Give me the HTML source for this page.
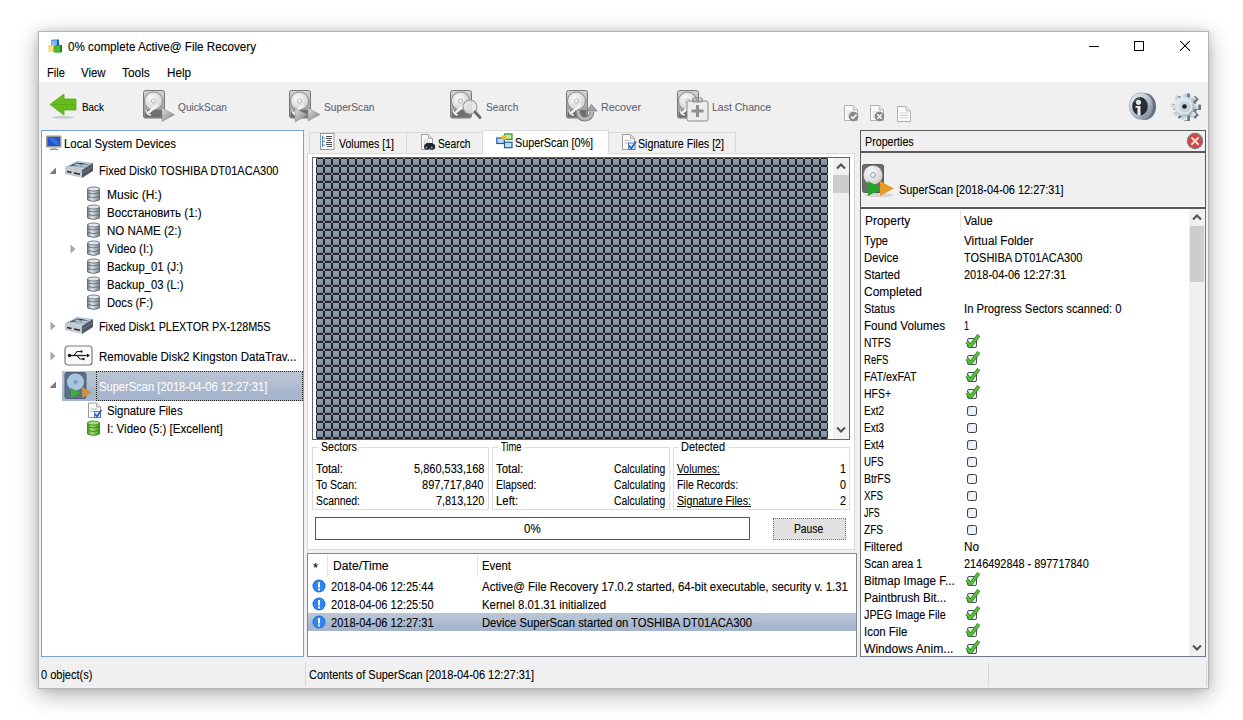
<!DOCTYPE html><html><head><meta charset="utf-8"><style>
*{margin:0;padding:0}
html,body{width:1243px;height:720px;overflow:hidden;background:#fff;font-family:"Liberation Sans",sans-serif}
.a{position:absolute;display:block}
.t{position:absolute;white-space:pre;font-family:"Liberation Sans",sans-serif;-webkit-text-stroke:0.1px currentColor}
</style></head><body><div class="a" style="left:38px;top:31px;width:1171px;height:658px;box-shadow:0 6px 22px rgba(0,0,0,0.30), 0 0 8px rgba(0,0,0,0.12);background:#f0f0f0"></div>
<div class="a" style="left:38px;top:31px;width:1171px;height:658px;background:#f0f0f0;box-sizing:border-box;border:1px solid #b4b4b4;"></div>
<div class="a" style="left:39px;top:32px;width:1169px;height:50px;background:#ffffff;"></div>
<div class="t" style="left:68px;top:41px;font-size:12px;line-height:12px;color:#000;transform:scaleX(0.9711);transform-origin:0 0;">0% complete Active@ File Recovery</div>
<div class="a" style="left:1089px;top:46px;width:10px;height:1px;background:#000;"></div>
<div class="a" style="left:1134px;top:41px;width:10px;height:10px;box-sizing:border-box;border:1px solid #000;"></div>
<svg class="a" style="left:1180px;top:41px;shape-rendering:crispEdges;" width="10" height="10" viewBox="0 0 10 10"><rect x="0" y="0" width="1" height="1" fill="#000"/><rect x="9" y="0" width="1" height="1" fill="#000"/><rect x="1" y="0" width="1" height="1" fill="#000" opacity="0.3"/><rect x="8" y="0" width="1" height="1" fill="#000" opacity="0.3"/><rect x="1" y="1" width="1" height="1" fill="#000"/><rect x="8" y="1" width="1" height="1" fill="#000"/><rect x="2" y="1" width="1" height="1" fill="#000" opacity="0.3"/><rect x="7" y="1" width="1" height="1" fill="#000" opacity="0.3"/><rect x="2" y="2" width="1" height="1" fill="#000"/><rect x="7" y="2" width="1" height="1" fill="#000"/><rect x="3" y="2" width="1" height="1" fill="#000" opacity="0.3"/><rect x="6" y="2" width="1" height="1" fill="#000" opacity="0.3"/><rect x="3" y="3" width="1" height="1" fill="#000"/><rect x="6" y="3" width="1" height="1" fill="#000"/><rect x="4" y="3" width="1" height="1" fill="#000" opacity="0.3"/><rect x="5" y="3" width="1" height="1" fill="#000" opacity="0.3"/><rect x="4" y="4" width="1" height="1" fill="#000"/><rect x="5" y="4" width="1" height="1" fill="#000"/><rect x="5" y="4" width="1" height="1" fill="#000" opacity="0.3"/><rect x="4" y="4" width="1" height="1" fill="#000" opacity="0.3"/><rect x="5" y="5" width="1" height="1" fill="#000"/><rect x="4" y="5" width="1" height="1" fill="#000"/><rect x="6" y="5" width="1" height="1" fill="#000" opacity="0.3"/><rect x="3" y="5" width="1" height="1" fill="#000" opacity="0.3"/><rect x="6" y="6" width="1" height="1" fill="#000"/><rect x="3" y="6" width="1" height="1" fill="#000"/><rect x="7" y="6" width="1" height="1" fill="#000" opacity="0.3"/><rect x="2" y="6" width="1" height="1" fill="#000" opacity="0.3"/><rect x="7" y="7" width="1" height="1" fill="#000"/><rect x="2" y="7" width="1" height="1" fill="#000"/><rect x="8" y="7" width="1" height="1" fill="#000" opacity="0.3"/><rect x="1" y="7" width="1" height="1" fill="#000" opacity="0.3"/><rect x="8" y="8" width="1" height="1" fill="#000"/><rect x="1" y="8" width="1" height="1" fill="#000"/><rect x="9" y="8" width="1" height="1" fill="#000" opacity="0.3"/><rect x="0" y="8" width="1" height="1" fill="#000" opacity="0.3"/><rect x="9" y="9" width="1" height="1" fill="#000"/><rect x="0" y="9" width="1" height="1" fill="#000"/></svg>
<div class="t" style="left:47px;top:67px;font-size:12px;line-height:12px;color:#000;transform:scaleX(0.9305);transform-origin:0 0;">File</div>
<div class="t" style="left:81px;top:67px;font-size:12px;line-height:12px;color:#000;transform:scaleX(0.9536);transform-origin:0 0;">View</div>
<div class="t" style="left:122px;top:67px;font-size:12px;line-height:12px;color:#000;transform:scaleX(0.9887);transform-origin:0 0;">Tools</div>
<div class="t" style="left:167px;top:67px;font-size:12px;line-height:12px;color:#000;transform:scaleX(0.9722);transform-origin:0 0;">Help</div>
<div class="t" style="left:82px;top:102px;font-size:11px;line-height:11px;color:#000;transform:scaleX(0.8991);transform-origin:0 0;">Back</div>
<div class="t" style="left:178px;top:102px;font-size:11px;line-height:11px;color:#5f6670;transform:scaleX(0.9210);transform-origin:0 0;">QuickScan</div>
<div class="t" style="left:324px;top:102px;font-size:11px;line-height:11px;color:#5f6670;transform:scaleX(0.9277);transform-origin:0 0;">SuperScan</div>
<div class="t" style="left:486px;top:102px;font-size:11px;line-height:11px;color:#5f6670;transform:scaleX(0.9266);transform-origin:0 0;">Search</div>
<div class="t" style="left:601px;top:102px;font-size:11px;line-height:11px;color:#5f6670;transform:scaleX(0.9764);transform-origin:0 0;">Recover</div>
<div class="t" style="left:712px;top:102px;font-size:11px;line-height:11px;color:#5f6670;transform:scaleX(0.9552);transform-origin:0 0;">Last Chance</div>
<div class="a" style="left:41px;top:130px;width:263px;height:527px;background:#fff;box-sizing:border-box;border:1px solid #7aa2d6;"></div>
<div class="t" style="left:64px;top:138px;font-size:12px;line-height:12px;color:#000;transform:scaleX(0.9488);transform-origin:0 0;">Local System Devices</div>
<div class="t" style="left:99px;top:165px;font-size:12px;line-height:12px;color:#000;transform:scaleX(0.9206);transform-origin:0 0;">Fixed Disk0 TOSHIBA DT01ACA300</div>
<div class="t" style="left:107px;top:189px;font-size:12px;line-height:12px;color:#000;transform:scaleX(1.0005);transform-origin:0 0;">Music (H:)</div>
<div class="t" style="left:107px;top:207px;font-size:12px;line-height:12px;color:#000;transform:scaleX(0.9645);transform-origin:0 0;">Восстановить (1:)</div>
<div class="t" style="left:107px;top:225px;font-size:12px;line-height:12px;color:#000;transform:scaleX(0.9606);transform-origin:0 0;">NO NAME (2:)</div>
<div class="t" style="left:107px;top:243px;font-size:12px;line-height:12px;color:#000;transform:scaleX(0.9491);transform-origin:0 0;">Video (I:)</div>
<div class="t" style="left:107px;top:261px;font-size:12px;line-height:12px;color:#000;transform:scaleX(0.9415);transform-origin:0 0;">Backup_01 (J:)</div>
<div class="t" style="left:107px;top:279px;font-size:12px;line-height:12px;color:#000;transform:scaleX(0.9399);transform-origin:0 0;">Backup_03 (L:)</div>
<div class="t" style="left:107px;top:297px;font-size:12px;line-height:12px;color:#000;transform:scaleX(0.9322);transform-origin:0 0;">Docs (F:)</div>
<div class="t" style="left:99px;top:321px;font-size:12px;line-height:12px;color:#000;transform:scaleX(0.9033);transform-origin:0 0;">Fixed Disk1 PLEXTOR PX-128M5S</div>
<div class="t" style="left:99px;top:351px;font-size:12px;line-height:12px;color:#000;transform:scaleX(0.9609);transform-origin:0 0;">Removable Disk2 Kingston DataTrav...</div>
<div class="t" style="left:107px;top:405px;font-size:12px;line-height:12px;color:#000;transform:scaleX(0.9444);transform-origin:0 0;">Signature Files</div>
<div class="t" style="left:107px;top:423px;font-size:12px;line-height:12px;color:#000;transform:scaleX(0.9600);transform-origin:0 0;">I: Video (5:) [Excellent]</div>
<div class="a" style="left:62px;top:371px;width:241px;height:30px;background:linear-gradient(#b9c4d3,#b3bfd1 45%,#a8b7ce 60%,#a5b5cd);"></div>
<div class="a" style="left:96px;top:371px;width:207px;height:30px;box-sizing:border-box;border:1px dotted #222;"></div>
<div class="t" style="left:99px;top:381px;font-size:12px;line-height:12px;color:#fcfdff;transform:scaleX(0.9308);transform-origin:0 0;">SuperScan [2018-04-06 12:27:31]</div>
<div class="a" style="left:307px;top:153px;width:548px;height:397px;background:#fff;box-sizing:border-box;border:1px solid #d9d9d9;"></div>
<div class="a" style="left:309px;top:132px;width:98px;height:22px;background:#f0f0f0;box-sizing:border-box;border:1px solid #d9d9d9;"></div>
<div class="a" style="left:406px;top:132px;width:77px;height:22px;background:#f0f0f0;box-sizing:border-box;border:1px solid #d9d9d9;"></div>
<div class="a" style="left:608px;top:132px;width:128px;height:22px;background:#f0f0f0;box-sizing:border-box;border:1px solid #d9d9d9;"></div>
<div class="a" style="left:482px;top:130px;width:127px;height:24px;background:#fff;box-sizing:border-box;border:1px solid #d9d9d9;border-bottom:none;"></div>
<div class="t" style="left:339px;top:138px;font-size:12px;line-height:12px;color:#000;transform:scaleX(0.8771);transform-origin:0 0;">Volumes [1]</div>
<div class="t" style="left:438px;top:138px;font-size:12px;line-height:12px;color:#000;transform:scaleX(0.8546);transform-origin:0 0;">Search</div>
<div class="t" style="left:515px;top:137px;font-size:12px;line-height:12px;color:#000;transform:scaleX(0.8995);transform-origin:0 0;">SuperScan [0%]</div>
<div class="t" style="left:638px;top:138px;font-size:12px;line-height:12px;color:#000;transform:scaleX(0.8892);transform-origin:0 0;">Signature Files [2]</div>
<div class="a" style="left:312px;top:157px;width:538px;height:283px;background:#fff;box-sizing:border-box;border:1px solid #646464;"></div>
<svg class="a" style="left:0;top:0" width="1243" height="720" viewBox="0 0 1243 720"><defs><pattern id="tp" x="316" y="158" width="8" height="8" patternUnits="userSpaceOnUse"><rect width="8" height="8" fill="#212329"/><rect x="1" y="1" width="6" height="6" fill="url(#tg)"/><rect x="0" y="0" width="1" height="1" fill="#8c8c8c"/><rect x="7" y="0" width="1" height="1" fill="#8c8c8c"/><rect x="0" y="7" width="1" height="1" fill="#8c8c8c"/><rect x="7" y="7" width="1" height="1" fill="#8c8c8c"/></pattern><linearGradient id="tg" x1="0" y1="0" x2="0" y2="1"><stop offset="0" stop-color="#93a3b3"/><stop offset="1" stop-color="#7b8a99"/></linearGradient></defs><rect x="316" y="158" width="512" height="281" fill="url(#tp)"/></svg>
<div class="a" style="left:833px;top:158px;width:16px;height:281px;background:#f0f0f0;"></div>
<div class="a" style="left:833px;top:175px;width:16px;height:18px;background:#cdcdcd;"></div>
<svg class="a" style="left:836px;top:162px;" width="10" height="8" viewBox="0 0 10 8"><path d="M1 6.5 L5 2.5 L9 6.5" stroke="#505050" stroke-width="2" fill="none"/></svg>
<svg class="a" style="left:836px;top:426px;" width="10" height="8" viewBox="0 0 10 8"><path d="M1 1.5 L5 5.5 L9 1.5" stroke="#505050" stroke-width="2" fill="none"/></svg>
<div class="a" style="left:312px;top:447px;width:177px;height:63px;box-sizing:border-box;border:1px solid #dcdcdc;"></div>
<div class="a" style="left:492px;top:447px;width:178px;height:63px;box-sizing:border-box;border:1px solid #dcdcdc;"></div>
<div class="a" style="left:673px;top:447px;width:177px;height:63px;box-sizing:border-box;border:1px solid #dcdcdc;"></div>
<div class="a" style="left:318px;top:440px;width:40px;height:15px;background:#fff;"></div>
<div class="a" style="left:498px;top:440px;width:26px;height:15px;background:#fff;"></div>
<div class="a" style="left:678px;top:440px;width:50px;height:15px;background:#fff;"></div>
<div class="t" style="left:321px;top:441px;font-size:12px;line-height:12px;color:#000;transform:scaleX(0.8799);transform-origin:0 0;">Sectors</div>
<div class="t" style="left:501px;top:441px;font-size:12px;line-height:12px;color:#000;transform:scaleX(0.7738);transform-origin:0 0;">Time</div>
<div class="t" style="left:681px;top:441px;font-size:12px;line-height:12px;color:#000;transform:scaleX(0.9161);transform-origin:0 0;">Detected</div>
<div class="t" style="left:316px;top:463px;font-size:12px;line-height:12px;color:#000;transform:scaleX(0.9412);transform-origin:0 0;">Total:</div>
<div class="t" style="left:414px;top:463px;font-size:12px;line-height:12px;color:#000;transform:scaleX(0.9173);transform-origin:0 0;">5,860,533,168</div>
<div class="t" style="left:316px;top:479px;font-size:12px;line-height:12px;color:#000;transform:scaleX(0.8779);transform-origin:0 0;">To Scan:</div>
<div class="t" style="left:422px;top:479px;font-size:12px;line-height:12px;color:#000;transform:scaleX(0.9216);transform-origin:0 0;">897,717,840</div>
<div class="t" style="left:316px;top:495px;font-size:12px;line-height:12px;color:#000;transform:scaleX(0.8675);transform-origin:0 0;">Scanned:</div>
<div class="t" style="left:436px;top:495px;font-size:12px;line-height:12px;color:#000;transform:scaleX(0.9047);transform-origin:0 0;">7,813,120</div>
<div class="t" style="left:496px;top:463px;font-size:12px;line-height:12px;color:#000;transform:scaleX(0.9516);transform-origin:0 0;">Total:</div>
<div class="t" style="left:614px;top:463px;font-size:12px;line-height:12px;color:#000;transform:scaleX(0.8623);transform-origin:0 0;">Calculating</div>
<div class="t" style="left:496px;top:479px;font-size:12px;line-height:12px;color:#000;transform:scaleX(0.8629);transform-origin:0 0;">Elapsed:</div>
<div class="t" style="left:614px;top:479px;font-size:12px;line-height:12px;color:#000;transform:scaleX(0.8623);transform-origin:0 0;">Calculating</div>
<div class="t" style="left:496px;top:495px;font-size:12px;line-height:12px;color:#000;transform:scaleX(0.9461);transform-origin:0 0;">Left:</div>
<div class="t" style="left:614px;top:495px;font-size:12px;line-height:12px;color:#000;transform:scaleX(0.8623);transform-origin:0 0;">Calculating</div>
<div class="t" style="left:677px;top:463px;font-size:12px;line-height:12px;color:#000;transform:scaleX(0.8671);transform-origin:0 0;text-decoration:underline;">Volumes:</div>
<div class="t" style="left:840px;top:463px;font-size:12px;line-height:12px;color:#000;transform:scaleX(0.8972);transform-origin:0 0;">1</div>
<div class="t" style="left:677px;top:479px;font-size:12px;line-height:12px;color:#000;transform:scaleX(0.8630);transform-origin:0 0;">File Records:</div>
<div class="t" style="left:840px;top:479px;font-size:12px;line-height:12px;color:#000;transform:scaleX(0.8972);transform-origin:0 0;">0</div>
<div class="t" style="left:677px;top:495px;font-size:12px;line-height:12px;color:#000;transform:scaleX(0.8876);transform-origin:0 0;text-decoration:underline;">Signature Files:</div>
<div class="t" style="left:840px;top:495px;font-size:12px;line-height:12px;color:#000;transform:scaleX(0.8972);transform-origin:0 0;">2</div>
<div class="a" style="left:315px;top:517px;width:435px;height:23px;background:#fff;box-sizing:border-box;border:1px solid #555;"></div>
<div class="t" style="left:524px;top:523px;font-size:12px;line-height:12px;color:#000;transform:scaleX(0.9571);transform-origin:0 0;">0%</div>
<div class="a" style="left:773px;top:518px;width:73px;height:22px;background:#e1e1e1;box-sizing:border-box;border:1px dotted #6f7883;"></div>
<div class="t" style="left:794px;top:523px;font-size:12px;line-height:12px;color:#000;transform:scaleX(0.8580);transform-origin:0 0;">Pause</div>
<div class="a" style="left:307px;top:553px;width:550px;height:104px;background:#fff;box-sizing:border-box;border:1px solid #828790;"></div>
<div class="a" style="left:327px;top:555px;width:1px;height:22px;background:#e5e5e5;"></div>
<div class="a" style="left:477px;top:555px;width:1px;height:22px;background:#e5e5e5;"></div>
<div class="t" style="left:313px;top:562px;font-size:12px;line-height:12px;color:#000;transform:scaleX(1.0702);transform-origin:0 0;">*</div>
<div class="t" style="left:333px;top:560px;font-size:12px;line-height:12px;color:#000;transform:scaleX(1.0126);transform-origin:0 0;">Date/Time</div>
<div class="t" style="left:482px;top:560px;font-size:12px;line-height:12px;color:#000;transform:scaleX(0.9450);transform-origin:0 0;">Event</div>
<div class="a" style="left:308px;top:613px;width:548px;height:18px;background:linear-gradient(#bac6d6,#b3c0d3 45%,#a7b7cf 60%,#a5b5ce);"></div>
<div class="t" style="left:331px;top:581px;font-size:12px;line-height:12px;color:#000;transform:scaleX(0.9207);transform-origin:0 0;">2018-04-06 12:25:44</div>
<div class="t" style="left:482px;top:581px;font-size:12px;line-height:12px;color:#000;transform:scaleX(0.9561);transform-origin:0 0;">Active@ File Recovery 17.0.2 started, 64-bit executable, security v. 1.31</div>
<svg class="a" style="left:312px;top:579px;" width="14" height="14" viewBox="0 0 14 14"><circle cx="7" cy="7" r="6.5" fill="#1f6fd6"/><circle cx="7" cy="7" r="5.5" fill="#2f86ee"/><rect x="6" y="3" width="2" height="5.5" fill="#fff"/><rect x="6" y="9.5" width="2" height="2" fill="#fff"/></svg>
<div class="t" style="left:331px;top:599px;font-size:12px;line-height:12px;color:#000;transform:scaleX(0.9207);transform-origin:0 0;">2018-04-06 12:25:50</div>
<div class="t" style="left:482px;top:599px;font-size:12px;line-height:12px;color:#000;transform:scaleX(0.9483);transform-origin:0 0;">Kernel 8.01.31 initialized</div>
<svg class="a" style="left:312px;top:597px;" width="14" height="14" viewBox="0 0 14 14"><circle cx="7" cy="7" r="6.5" fill="#1f6fd6"/><circle cx="7" cy="7" r="5.5" fill="#2f86ee"/><rect x="6" y="3" width="2" height="5.5" fill="#fff"/><rect x="6" y="9.5" width="2" height="2" fill="#fff"/></svg>
<div class="t" style="left:331px;top:617px;font-size:12px;line-height:12px;color:#000;transform:scaleX(0.9207);transform-origin:0 0;">2018-04-06 12:27:31</div>
<div class="t" style="left:482px;top:617px;font-size:12px;line-height:12px;color:#000;transform:scaleX(0.9363);transform-origin:0 0;">Device SuperScan started on TOSHIBA DT01ACA300</div>
<svg class="a" style="left:312px;top:615px;" width="14" height="14" viewBox="0 0 14 14"><circle cx="7" cy="7" r="6.5" fill="#1f6fd6"/><circle cx="7" cy="7" r="5.5" fill="#2f86ee"/><rect x="6" y="3" width="2" height="5.5" fill="#fff"/><rect x="6" y="9.5" width="2" height="2" fill="#fff"/></svg>
<div class="t" style="left:41px;top:669px;font-size:12px;line-height:12px;color:#000;transform:scaleX(0.9173);transform-origin:0 0;">0 object(s)</div>
<div class="a" style="left:305px;top:662px;width:1px;height:24px;background:#dadada;"></div>
<div class="t" style="left:309px;top:669px;font-size:12px;line-height:12px;color:#000;transform:scaleX(0.9164);transform-origin:0 0;">Contents of SuperScan [2018-04-06 12:27:31]</div>
<div class="a" style="left:988px;top:662px;width:1px;height:24px;background:#dadada;"></div>
<div class="a" style="left:1206px;top:662px;width:1px;height:24px;background:#dadada;"></div>
<div class="a" style="left:860px;top:130px;width:346px;height:22px;background:#f0f0f0;box-sizing:border-box;border:1px solid #5a5a5a;"></div>
<div class="a" style="left:860px;top:151px;width:346px;height:58px;background:#f0f0f0;box-sizing:border-box;border:1px solid #5a5a5a;"></div>
<div class="a" style="left:861px;top:152px;width:344px;height:1px;background:#5a5a5a;"></div>
<div class="t" style="left:865px;top:136px;font-size:12px;line-height:12px;color:#000;transform:scaleX(0.8903);transform-origin:0 0;">Properties</div>
<svg class="a" style="left:1186px;top:132px;" width="18" height="18" viewBox="0 0 18 18"><circle cx="9" cy="9" r="7.6" fill="#d8473e" stroke="#6f7f90" stroke-width="1.2"/><path d="M5.4 5.4 L12.6 12.6 M12.6 5.4 L5.4 12.6" stroke="#f4f0f0" stroke-width="1.7"/></svg>
<div class="t" style="left:899px;top:184px;font-size:12px;line-height:12px;color:#000;transform:scaleX(0.9098);transform-origin:0 0;">SuperScan [2018-04-06 12:27:31]</div>
<div class="a" style="left:860px;top:208px;width:346px;height:449px;background:#fff;box-sizing:border-box;border:1px solid #6f7784;"></div>
<div class="a" style="left:860px;top:207px;width:346px;height:1px;background:#5a5a5a;"></div>
<div class="a" style="left:860px;top:208px;width:346px;height:1px;background:#5a5a5a;"></div>
<div class="a" style="left:861px;top:206px;width:344px;height:1px;background:#ffffff;"></div>
<div class="a" style="left:960px;top:210px;width:1px;height:21px;background:#e5e5e5;"></div>
<div class="t" style="left:865px;top:215px;font-size:12px;line-height:12px;color:#000;transform:scaleX(0.9965);transform-origin:0 0;">Property</div>
<div class="t" style="left:964px;top:215px;font-size:12px;line-height:12px;color:#000;transform:scaleX(0.9660);transform-origin:0 0;">Value</div>
<div class="t" style="left:864px;top:235px;font-size:12px;line-height:12px;color:#000;transform:scaleX(0.9225);transform-origin:0 0;">Type</div>
<div class="t" style="left:964px;top:235px;font-size:12px;line-height:12px;color:#000;transform:scaleX(0.9767);transform-origin:0 0;">Virtual Folder</div>
<div class="t" style="left:864px;top:252px;font-size:12px;line-height:12px;color:#000;transform:scaleX(0.9404);transform-origin:0 0;">Device</div>
<div class="t" style="left:964px;top:252px;font-size:12px;line-height:12px;color:#000;transform:scaleX(0.9166);transform-origin:0 0;">TOSHIBA DT01ACA300</div>
<div class="t" style="left:864px;top:269px;font-size:12px;line-height:12px;color:#000;transform:scaleX(0.9302);transform-origin:0 0;">Started</div>
<div class="t" style="left:964px;top:269px;font-size:12px;line-height:12px;color:#000;transform:scaleX(0.9153);transform-origin:0 0;">2018-04-06 12:27:31</div>
<div class="t" style="left:864px;top:286px;font-size:12px;line-height:12px;color:#000;transform:scaleX(0.9995);transform-origin:0 0;">Completed</div>
<div class="t" style="left:864px;top:303px;font-size:12px;line-height:12px;color:#000;transform:scaleX(0.9109);transform-origin:0 0;">Status</div>
<div class="t" style="left:964px;top:303px;font-size:12px;line-height:12px;color:#000;transform:scaleX(0.9407);transform-origin:0 0;">In Progress Sectors scanned: 0</div>
<div class="t" style="left:864px;top:320px;font-size:12px;line-height:12px;color:#000;transform:scaleX(0.9713);transform-origin:0 0;">Found Volumes</div>
<div class="t" style="left:964px;top:320px;font-size:12px;line-height:12px;color:#000;transform:scaleX(0.7477);transform-origin:0 0;">1</div>
<div class="t" style="left:864px;top:337px;font-size:12px;line-height:12px;color:#000;transform:scaleX(0.8614);transform-origin:0 0;">NTFS</div>
<svg class="a" style="left:965px;top:333px;" width="16" height="16" viewBox="0 0 16 16"><rect x="2.5" y="5.5" width="9" height="9" rx="1.5" fill="#e4ecf3" stroke="#4a525a"/><path d="M1.8 8.8 L5.6 13.2 L13.8 2.2" stroke="#2a7a1a" stroke-width="3.6" fill="none" stroke-linejoin="round"/><path d="M1.8 8.8 L5.6 13.2 L13.8 2.2" stroke="#5cc33a" stroke-width="2.2" fill="none" stroke-linejoin="round"/></svg>
<div class="t" style="left:864px;top:354px;font-size:12px;line-height:12px;color:#000;transform:scaleX(0.7984);transform-origin:0 0;">ReFS</div>
<svg class="a" style="left:965px;top:350px;" width="16" height="16" viewBox="0 0 16 16"><rect x="2.5" y="5.5" width="9" height="9" rx="1.5" fill="#e4ecf3" stroke="#4a525a"/><path d="M1.8 8.8 L5.6 13.2 L13.8 2.2" stroke="#2a7a1a" stroke-width="3.6" fill="none" stroke-linejoin="round"/><path d="M1.8 8.8 L5.6 13.2 L13.8 2.2" stroke="#5cc33a" stroke-width="2.2" fill="none" stroke-linejoin="round"/></svg>
<div class="t" style="left:864px;top:371px;font-size:12px;line-height:12px;color:#000;transform:scaleX(0.9015);transform-origin:0 0;">FAT/exFAT</div>
<svg class="a" style="left:965px;top:367px;" width="16" height="16" viewBox="0 0 16 16"><rect x="2.5" y="5.5" width="9" height="9" rx="1.5" fill="#e4ecf3" stroke="#4a525a"/><path d="M1.8 8.8 L5.6 13.2 L13.8 2.2" stroke="#2a7a1a" stroke-width="3.6" fill="none" stroke-linejoin="round"/><path d="M1.8 8.8 L5.6 13.2 L13.8 2.2" stroke="#5cc33a" stroke-width="2.2" fill="none" stroke-linejoin="round"/></svg>
<div class="t" style="left:864px;top:388px;font-size:12px;line-height:12px;color:#000;transform:scaleX(0.8705);transform-origin:0 0;">HFS+</div>
<svg class="a" style="left:965px;top:384px;" width="16" height="16" viewBox="0 0 16 16"><rect x="2.5" y="5.5" width="9" height="9" rx="1.5" fill="#e4ecf3" stroke="#4a525a"/><path d="M1.8 8.8 L5.6 13.2 L13.8 2.2" stroke="#2a7a1a" stroke-width="3.6" fill="none" stroke-linejoin="round"/><path d="M1.8 8.8 L5.6 13.2 L13.8 2.2" stroke="#5cc33a" stroke-width="2.2" fill="none" stroke-linejoin="round"/></svg>
<div class="t" style="left:864px;top:405px;font-size:12px;line-height:12px;color:#000;transform:scaleX(0.8328);transform-origin:0 0;">Ext2</div>
<svg class="a" style="left:965px;top:404px;" width="14" height="14" viewBox="0 0 14 14"><defs><linearGradient id="cbg" x1="0" y1="0" x2="1" y2="1"><stop offset="0" stop-color="#b8c6d4"/><stop offset="0.4" stop-color="#f2f6fa"/><stop offset="1" stop-color="#dfe8f0"/></linearGradient></defs><rect x="2.5" y="2.5" width="9" height="9" rx="1.8" fill="url(#cbg)" stroke="#3a3f45"/></svg>
<div class="t" style="left:864px;top:422px;font-size:12px;line-height:12px;color:#000;transform:scaleX(0.8328);transform-origin:0 0;">Ext3</div>
<svg class="a" style="left:965px;top:421px;" width="14" height="14" viewBox="0 0 14 14"><defs><linearGradient id="cbg" x1="0" y1="0" x2="1" y2="1"><stop offset="0" stop-color="#b8c6d4"/><stop offset="0.4" stop-color="#f2f6fa"/><stop offset="1" stop-color="#dfe8f0"/></linearGradient></defs><rect x="2.5" y="2.5" width="9" height="9" rx="1.8" fill="url(#cbg)" stroke="#3a3f45"/></svg>
<div class="t" style="left:864px;top:439px;font-size:12px;line-height:12px;color:#000;transform:scaleX(0.8328);transform-origin:0 0;">Ext4</div>
<svg class="a" style="left:965px;top:438px;" width="14" height="14" viewBox="0 0 14 14"><defs><linearGradient id="cbg" x1="0" y1="0" x2="1" y2="1"><stop offset="0" stop-color="#b8c6d4"/><stop offset="0.4" stop-color="#f2f6fa"/><stop offset="1" stop-color="#dfe8f0"/></linearGradient></defs><rect x="2.5" y="2.5" width="9" height="9" rx="1.8" fill="url(#cbg)" stroke="#3a3f45"/></svg>
<div class="t" style="left:864px;top:456px;font-size:12px;line-height:12px;color:#000;transform:scaleX(0.8125);transform-origin:0 0;">UFS</div>
<svg class="a" style="left:965px;top:455px;" width="14" height="14" viewBox="0 0 14 14"><defs><linearGradient id="cbg" x1="0" y1="0" x2="1" y2="1"><stop offset="0" stop-color="#b8c6d4"/><stop offset="0.4" stop-color="#f2f6fa"/><stop offset="1" stop-color="#dfe8f0"/></linearGradient></defs><rect x="2.5" y="2.5" width="9" height="9" rx="1.8" fill="url(#cbg)" stroke="#3a3f45"/></svg>
<div class="t" style="left:864px;top:473px;font-size:12px;line-height:12px;color:#000;transform:scaleX(0.8705);transform-origin:0 0;">BtrFS</div>
<svg class="a" style="left:965px;top:472px;" width="14" height="14" viewBox="0 0 14 14"><defs><linearGradient id="cbg" x1="0" y1="0" x2="1" y2="1"><stop offset="0" stop-color="#b8c6d4"/><stop offset="0.4" stop-color="#f2f6fa"/><stop offset="1" stop-color="#dfe8f0"/></linearGradient></defs><rect x="2.5" y="2.5" width="9" height="9" rx="1.8" fill="url(#cbg)" stroke="#3a3f45"/></svg>
<div class="t" style="left:864px;top:490px;font-size:12px;line-height:12px;color:#000;transform:scaleX(0.8139);transform-origin:0 0;">XFS</div>
<svg class="a" style="left:965px;top:489px;" width="14" height="14" viewBox="0 0 14 14"><defs><linearGradient id="cbg" x1="0" y1="0" x2="1" y2="1"><stop offset="0" stop-color="#b8c6d4"/><stop offset="0.4" stop-color="#f2f6fa"/><stop offset="1" stop-color="#dfe8f0"/></linearGradient></defs><rect x="2.5" y="2.5" width="9" height="9" rx="1.8" fill="url(#cbg)" stroke="#3a3f45"/></svg>
<div class="t" style="left:864px;top:507px;font-size:12px;line-height:12px;color:#000;transform:scaleX(0.7356);transform-origin:0 0;">JFS</div>
<svg class="a" style="left:965px;top:506px;" width="14" height="14" viewBox="0 0 14 14"><defs><linearGradient id="cbg" x1="0" y1="0" x2="1" y2="1"><stop offset="0" stop-color="#b8c6d4"/><stop offset="0.4" stop-color="#f2f6fa"/><stop offset="1" stop-color="#dfe8f0"/></linearGradient></defs><rect x="2.5" y="2.5" width="9" height="9" rx="1.8" fill="url(#cbg)" stroke="#3a3f45"/></svg>
<div class="t" style="left:864px;top:524px;font-size:12px;line-height:12px;color:#000;transform:scaleX(0.8380);transform-origin:0 0;">ZFS</div>
<svg class="a" style="left:965px;top:523px;" width="14" height="14" viewBox="0 0 14 14"><defs><linearGradient id="cbg" x1="0" y1="0" x2="1" y2="1"><stop offset="0" stop-color="#b8c6d4"/><stop offset="0.4" stop-color="#f2f6fa"/><stop offset="1" stop-color="#dfe8f0"/></linearGradient></defs><rect x="2.5" y="2.5" width="9" height="9" rx="1.8" fill="url(#cbg)" stroke="#3a3f45"/></svg>
<div class="t" style="left:864px;top:541px;font-size:12px;line-height:12px;color:#000;transform:scaleX(0.9571);transform-origin:0 0;">Filtered</div>
<div class="t" style="left:964px;top:541px;font-size:12px;line-height:12px;color:#000;transform:scaleX(0.9776);transform-origin:0 0;">No</div>
<div class="t" style="left:864px;top:558px;font-size:12px;line-height:12px;color:#000;transform:scaleX(0.9008);transform-origin:0 0;">Scan area 1</div>
<div class="t" style="left:964px;top:558px;font-size:12px;line-height:12px;color:#000;transform:scaleX(0.9071);transform-origin:0 0;">2146492848 - 897717840</div>
<div class="t" style="left:864px;top:575px;font-size:12px;line-height:12px;color:#000;transform:scaleX(0.9714);transform-origin:0 0;">Bitmap Image F...</div>
<svg class="a" style="left:965px;top:571px;" width="16" height="16" viewBox="0 0 16 16"><rect x="2.5" y="5.5" width="9" height="9" rx="1.5" fill="#e4ecf3" stroke="#4a525a"/><path d="M1.8 8.8 L5.6 13.2 L13.8 2.2" stroke="#2a7a1a" stroke-width="3.6" fill="none" stroke-linejoin="round"/><path d="M1.8 8.8 L5.6 13.2 L13.8 2.2" stroke="#5cc33a" stroke-width="2.2" fill="none" stroke-linejoin="round"/></svg>
<div class="t" style="left:864px;top:592px;font-size:12px;line-height:12px;color:#000;transform:scaleX(0.9714);transform-origin:0 0;">Paintbrush Bit...</div>
<svg class="a" style="left:965px;top:588px;" width="16" height="16" viewBox="0 0 16 16"><rect x="2.5" y="5.5" width="9" height="9" rx="1.5" fill="#e4ecf3" stroke="#4a525a"/><path d="M1.8 8.8 L5.6 13.2 L13.8 2.2" stroke="#2a7a1a" stroke-width="3.6" fill="none" stroke-linejoin="round"/><path d="M1.8 8.8 L5.6 13.2 L13.8 2.2" stroke="#5cc33a" stroke-width="2.2" fill="none" stroke-linejoin="round"/></svg>
<div class="t" style="left:864px;top:609px;font-size:12px;line-height:12px;color:#000;transform:scaleX(0.9007);transform-origin:0 0;">JPEG Image File</div>
<svg class="a" style="left:965px;top:605px;" width="16" height="16" viewBox="0 0 16 16"><rect x="2.5" y="5.5" width="9" height="9" rx="1.5" fill="#e4ecf3" stroke="#4a525a"/><path d="M1.8 8.8 L5.6 13.2 L13.8 2.2" stroke="#2a7a1a" stroke-width="3.6" fill="none" stroke-linejoin="round"/><path d="M1.8 8.8 L5.6 13.2 L13.8 2.2" stroke="#5cc33a" stroke-width="2.2" fill="none" stroke-linejoin="round"/></svg>
<div class="t" style="left:864px;top:626px;font-size:12px;line-height:12px;color:#000;transform:scaleX(0.9546);transform-origin:0 0;">Icon File</div>
<svg class="a" style="left:965px;top:622px;" width="16" height="16" viewBox="0 0 16 16"><rect x="2.5" y="5.5" width="9" height="9" rx="1.5" fill="#e4ecf3" stroke="#4a525a"/><path d="M1.8 8.8 L5.6 13.2 L13.8 2.2" stroke="#2a7a1a" stroke-width="3.6" fill="none" stroke-linejoin="round"/><path d="M1.8 8.8 L5.6 13.2 L13.8 2.2" stroke="#5cc33a" stroke-width="2.2" fill="none" stroke-linejoin="round"/></svg>
<div class="t" style="left:864px;top:643px;font-size:12px;line-height:12px;color:#000;transform:scaleX(1.0079);transform-origin:0 0;">Windows Anim...</div>
<svg class="a" style="left:965px;top:639px;" width="16" height="16" viewBox="0 0 16 16"><rect x="2.5" y="5.5" width="9" height="9" rx="1.5" fill="#e4ecf3" stroke="#4a525a"/><path d="M1.8 8.8 L5.6 13.2 L13.8 2.2" stroke="#2a7a1a" stroke-width="3.6" fill="none" stroke-linejoin="round"/><path d="M1.8 8.8 L5.6 13.2 L13.8 2.2" stroke="#5cc33a" stroke-width="2.2" fill="none" stroke-linejoin="round"/></svg>
<div class="a" style="left:1189px;top:209px;width:16px;height:447px;background:#f0f0f0;"></div>
<div class="a" style="left:1190px;top:226px;width:14px;height:56px;background:#cdcdcd;"></div>
<svg class="a" style="left:1192px;top:213px;" width="10" height="8" viewBox="0 0 10 8"><path d="M1 6.5 L5 2.5 L9 6.5" stroke="#505050" stroke-width="2" fill="none"/></svg>
<svg class="a" style="left:1192px;top:644px;" width="10" height="8" viewBox="0 0 10 8"><path d="M1 1.5 L5 5.5 L9 1.5" stroke="#505050" stroke-width="2" fill="none"/></svg>
<svg class="a" style="left:47px;top:38px;" width="16" height="16" viewBox="0 0 16 16">
<path d="M4 2.5 L6 1.5 L12 1.5 L12 8 L10 9 L4 9 Z" fill="#2f7fd8"/>
<rect x="4" y="2.5" width="6" height="6.5" fill="#6fb6f4"/><path d="M10 2.5 L12 1.5 V8 L10 9 Z" fill="#1a55a8"/>
<path d="M5 4 L8.5 7.5" stroke="#bfe0ff" stroke-width="0.8"/>
<path d="M1 8 L2.5 7 L8 7 L8 13.5 L1 14 Z" fill="#f0d070"/><rect x="1" y="8" width="5.5" height="6" fill="#f6e08a"/><path d="M6.5 8 L8 7 V13.5 L6.5 14 Z" fill="#d98a18"/>
<path d="M7.5 8 L9 7 L15 7 L15 13.5 L13.5 14.5 L7.5 14.5 Z" fill="#2f9a22"/><rect x="7.5" y="8" width="6" height="6.5" fill="#4cb832"/><path d="M13.5 8 L15 7 V13.5 L13.5 14.5 Z" fill="#1d6e16"/>
</svg>
<svg class="a" style="left:48px;top:92px;" width="30" height="28" viewBox="0 0 30 28">
<ellipse cx="15" cy="25.3" rx="11" ry="1.2" fill="#9a9a9a" opacity="0.45"/>
<path d="M2 12.5 L16 2 L16 7 L28 7 L28 18 L16 18 L16 23 Z" fill="#66bc1c" stroke="#5aa818" stroke-width="0.8" stroke-linejoin="round"/>
<path d="M6 12.5 L26 12.5" stroke="#3f8f14" stroke-width="1" stroke-dasharray="1.5 1.5" opacity="0.6"/>
</svg>
<svg class="a" style="left:143px;top:90px;" width="34" height="34" viewBox="0 0 34 34">
<defs><linearGradient id="hg" x1="0" y1="0" x2="0" y2="1"><stop offset="0" stop-color="#d4d4d4"/><stop offset="1" stop-color="#8c8c8c"/></linearGradient>
<radialGradient id="pg" cx="0.4" cy="0.35" r="0.7"><stop offset="0" stop-color="#fafafa"/><stop offset="1" stop-color="#cfcfcf"/></radialGradient>
<linearGradient id="tg2" x1="0" y1="0" x2="1" y2="1"><stop offset="0" stop-color="#e0e0e0"/><stop offset="1" stop-color="#7a7a7a"/></linearGradient></defs>
<rect x="0.5" y="0.5" width="21" height="27.5" rx="2" fill="url(#hg)" stroke="#767676"/>
<rect x="2" y="20" width="18" height="7" fill="#6f6f6f"/>
<circle cx="10.5" cy="11" r="9" fill="url(#pg)" stroke="#7a7a7a" stroke-width="0.8"/>
<circle cx="10.5" cy="11" r="2.2" fill="none" stroke="#b0b0b0" stroke-width="0.8"/>
<path d="M5 23 L14 15.5" stroke="#f4f4f4" stroke-width="2.4" stroke-linecap="round"/>
<path d="M3 20 Q4 25 8 25" stroke="#e6e6e6" stroke-width="1.6" fill="none"/>
<path d="M19 18 L31.5 24.75 L19 31.5 Z" fill="url(#tg2)" stroke="#8a8a8a" stroke-width="0.5"/></svg>
<svg class="a" style="left:289px;top:90px;" width="34" height="34" viewBox="0 0 34 34">
<defs><linearGradient id="hg" x1="0" y1="0" x2="0" y2="1"><stop offset="0" stop-color="#d4d4d4"/><stop offset="1" stop-color="#8c8c8c"/></linearGradient>
<radialGradient id="pg" cx="0.4" cy="0.35" r="0.7"><stop offset="0" stop-color="#fafafa"/><stop offset="1" stop-color="#cfcfcf"/></radialGradient>
<linearGradient id="tg2" x1="0" y1="0" x2="1" y2="1"><stop offset="0" stop-color="#e0e0e0"/><stop offset="1" stop-color="#7a7a7a"/></linearGradient></defs>
<rect x="0.5" y="0.5" width="21" height="27.5" rx="2" fill="url(#hg)" stroke="#767676"/>
<rect x="2" y="20" width="18" height="7" fill="#6f6f6f"/>
<circle cx="10.5" cy="11" r="9" fill="url(#pg)" stroke="#7a7a7a" stroke-width="0.8"/>
<circle cx="10.5" cy="11" r="2.2" fill="none" stroke="#b0b0b0" stroke-width="0.8"/>
<path d="M5 23 L14 15.5" stroke="#f4f4f4" stroke-width="2.4" stroke-linecap="round"/>
<path d="M3 20 Q4 25 8 25" stroke="#e6e6e6" stroke-width="1.6" fill="none"/>
<path d="M6 18 L19 25.0 L6 32 Z" fill="url(#tg2)" stroke="#8a8a8a" stroke-width="0.5"/><path d="M19 18 L31 24.5 L19 31 Z" fill="url(#tg2)" stroke="#8a8a8a" stroke-width="0.5"/></svg>
<svg class="a" style="left:450px;top:90px;" width="34" height="34" viewBox="0 0 34 34">
<defs><linearGradient id="hg" x1="0" y1="0" x2="0" y2="1"><stop offset="0" stop-color="#d4d4d4"/><stop offset="1" stop-color="#8c8c8c"/></linearGradient>
<radialGradient id="pg" cx="0.4" cy="0.35" r="0.7"><stop offset="0" stop-color="#fafafa"/><stop offset="1" stop-color="#cfcfcf"/></radialGradient>
<linearGradient id="tg2" x1="0" y1="0" x2="1" y2="1"><stop offset="0" stop-color="#e0e0e0"/><stop offset="1" stop-color="#7a7a7a"/></linearGradient></defs>
<rect x="0.5" y="0.5" width="21" height="27.5" rx="2" fill="url(#hg)" stroke="#767676"/>
<rect x="2" y="20" width="18" height="7" fill="#6f6f6f"/>
<circle cx="10.5" cy="11" r="9" fill="url(#pg)" stroke="#7a7a7a" stroke-width="0.8"/>
<circle cx="10.5" cy="11" r="2.2" fill="none" stroke="#b0b0b0" stroke-width="0.8"/>
<path d="M5 23 L14 15.5" stroke="#f4f4f4" stroke-width="2.4" stroke-linecap="round"/>
<path d="M3 20 Q4 25 8 25" stroke="#e6e6e6" stroke-width="1.6" fill="none"/>
<circle cx="20" cy="17" r="7" fill="#e8e8e8" fill-opacity="0.85" stroke="#9a9a9a" stroke-width="1.2"/><path d="M25 22 L30 27.5" stroke="#6a6a6a" stroke-width="3" stroke-linecap="round"/></svg>
<svg class="a" style="left:566px;top:90px;" width="34" height="34" viewBox="0 0 34 34">
<defs><linearGradient id="hg" x1="0" y1="0" x2="0" y2="1"><stop offset="0" stop-color="#d4d4d4"/><stop offset="1" stop-color="#8c8c8c"/></linearGradient>
<radialGradient id="pg" cx="0.4" cy="0.35" r="0.7"><stop offset="0" stop-color="#fafafa"/><stop offset="1" stop-color="#cfcfcf"/></radialGradient>
<linearGradient id="tg2" x1="0" y1="0" x2="1" y2="1"><stop offset="0" stop-color="#e0e0e0"/><stop offset="1" stop-color="#7a7a7a"/></linearGradient></defs>
<rect x="0.5" y="0.5" width="21" height="27.5" rx="2" fill="url(#hg)" stroke="#767676"/>
<rect x="2" y="20" width="18" height="7" fill="#6f6f6f"/>
<circle cx="10.5" cy="11" r="9" fill="url(#pg)" stroke="#7a7a7a" stroke-width="0.8"/>
<circle cx="10.5" cy="11" r="2.2" fill="none" stroke="#b0b0b0" stroke-width="0.8"/>
<path d="M5 23 L14 15.5" stroke="#f4f4f4" stroke-width="2.4" stroke-linecap="round"/>
<path d="M3 20 Q4 25 8 25" stroke="#e6e6e6" stroke-width="1.6" fill="none"/>
<path d="M12 20 Q12 29 19 29 Q25 29 26 22" stroke="#7d7d7d" stroke-width="5" fill="none"/><path d="M12 20 Q12 29 19 29 Q25 29 26 22" stroke="#b5b5b5" stroke-width="3" fill="none"/><path d="M21 21 L25.5 14.5 L31 21 Z" fill="#a0a0a0" stroke="#7d7d7d" stroke-width="0.8"/></svg>
<svg class="a" style="left:677px;top:90px;" width="34" height="34" viewBox="0 0 34 34">
<defs><linearGradient id="hg" x1="0" y1="0" x2="0" y2="1"><stop offset="0" stop-color="#d4d4d4"/><stop offset="1" stop-color="#8c8c8c"/></linearGradient>
<radialGradient id="pg" cx="0.4" cy="0.35" r="0.7"><stop offset="0" stop-color="#fafafa"/><stop offset="1" stop-color="#cfcfcf"/></radialGradient>
<linearGradient id="tg2" x1="0" y1="0" x2="1" y2="1"><stop offset="0" stop-color="#e0e0e0"/><stop offset="1" stop-color="#7a7a7a"/></linearGradient></defs>
<rect x="0.5" y="0.5" width="21" height="27.5" rx="2" fill="url(#hg)" stroke="#767676"/>
<rect x="2" y="20" width="18" height="7" fill="#6f6f6f"/>
<circle cx="10.5" cy="11" r="9" fill="url(#pg)" stroke="#7a7a7a" stroke-width="0.8"/>
<circle cx="10.5" cy="11" r="2.2" fill="none" stroke="#b0b0b0" stroke-width="0.8"/>
<path d="M5 23 L14 15.5" stroke="#f4f4f4" stroke-width="2.4" stroke-linecap="round"/>
<path d="M3 20 Q4 25 8 25" stroke="#e6e6e6" stroke-width="1.6" fill="none"/>
<rect x="10" y="11" width="21" height="20" rx="1.5" fill="#ececec" stroke="#8a8a8a"/><rect x="16" y="8" width="9" height="4" rx="1" fill="none" stroke="#8a8a8a" stroke-width="1.2"/><path d="M20.5 15 V27 M14.5 21 H26.5" stroke="#8f8f8f" stroke-width="3"/></svg>
<svg class="a" style="left:843px;top:104px;" width="16" height="18" viewBox="0 0 16 18"><path d="M1.5 1.5 H10 L14.5 6 V16.5 H1.5 Z" fill="#fbfbfb" stroke="#b0b0b0"/><path d="M10 1.5 V6 H14.5" fill="#e6e6e6" stroke="#b0b0b0" stroke-width="0.8"/><path d="M4 8 H12 M4 10.5 H12 M4 13 H12" stroke="#cfcfcf" stroke-width="1"/><circle cx="10.5" cy="12.5" r="4.8" fill="#8a8a8a"/><path d="M8 12.5 L10 14.5 L13.5 10.5" stroke="#fff" stroke-width="1.4" fill="none"/></svg>
<svg class="a" style="left:869px;top:104px;" width="16" height="18" viewBox="0 0 16 18"><path d="M1.5 1.5 H10 L14.5 6 V16.5 H1.5 Z" fill="#fbfbfb" stroke="#b0b0b0"/><path d="M10 1.5 V6 H14.5" fill="#e6e6e6" stroke="#b0b0b0" stroke-width="0.8"/><path d="M4 8 H12 M4 10.5 H12 M4 13 H12" stroke="#cfcfcf" stroke-width="1"/><circle cx="10.5" cy="12.5" r="4.8" fill="#8a8a8a"/><path d="M8.3 10.3 L12.7 14.7 M12.7 10.3 L8.3 14.7" stroke="#fff" stroke-width="1.3"/></svg>
<svg class="a" style="left:896px;top:105px;" width="16" height="18" viewBox="0 0 16 18"><path d="M1.5 1.5 H10 L14.5 6 V16.5 H1.5 Z" fill="#fbfbfb" stroke="#b0b0b0"/><path d="M10 1.5 V6 H14.5" fill="#e6e6e6" stroke="#b0b0b0" stroke-width="0.8"/><path d="M4 8 H12 M4 10.5 H12 M4 13 H12" stroke="#cfcfcf" stroke-width="1"/></svg>
<svg class="a" style="left:1126px;top:90px;" width="34" height="32" viewBox="0 0 34 32">
<defs><linearGradient id="ig" x1="0" y1="0" x2="1" y2="1"><stop offset="0" stop-color="#f2f5f8"/><stop offset="0.55" stop-color="#b3bfca"/><stop offset="1" stop-color="#6f7c88"/></linearGradient>
<linearGradient id="ig2" x1="0" y1="0" x2="1" y2="0"><stop offset="0" stop-color="#9aa7b3"/><stop offset="1" stop-color="#5d6975"/></linearGradient></defs>
<ellipse cx="19" cy="16.5" rx="11" ry="13.5" fill="url(#ig2)"/>
<ellipse cx="15" cy="16" rx="11.8" ry="13.3" fill="url(#ig)" stroke="#8d99a4" stroke-width="0.6"/>
<ellipse cx="14" cy="16.3" rx="7.8" ry="9.2" fill="#2a2e34"/>
<path d="M8 12 Q10 9 14 8" stroke="#6b7a88" stroke-width="1" fill="none"/>
<circle cx="12.5" cy="12.3" r="2.6" fill="#dfe6ec"/>
<path d="M9.5 16 H14.5 V25.5 H11.5 V17.8 H9.5 Z" fill="#e9eef2"/>
</svg>
<svg class="a" style="left:1170px;top:91px;" width="32" height="32" viewBox="0 0 32 32">
<defs><linearGradient id="gg" x1="0" y1="0" x2="1" y2="1"><stop offset="0" stop-color="#f4f7fa"/><stop offset="0.6" stop-color="#c3ced8"/><stop offset="1" stop-color="#8c99a5"/></linearGradient></defs>
<g transform="translate(17.2 16.2)" fill="#6c7884"><rect x="-2.8" y="-13.8" width="5.6" height="6" rx="0.6" transform="rotate(0)"/><rect x="-2.8" y="-13.8" width="5.6" height="6" rx="0.6" transform="rotate(45)"/><rect x="-2.8" y="-13.8" width="5.6" height="6" rx="0.6" transform="rotate(90)"/><rect x="-2.8" y="-13.8" width="5.6" height="6" rx="0.6" transform="rotate(135)"/><rect x="-2.8" y="-13.8" width="5.6" height="6" rx="0.6" transform="rotate(180)"/><rect x="-2.8" y="-13.8" width="5.6" height="6" rx="0.6" transform="rotate(225)"/><rect x="-2.8" y="-13.8" width="5.6" height="6" rx="0.6" transform="rotate(270)"/><rect x="-2.8" y="-13.8" width="5.6" height="6" rx="0.6" transform="rotate(315)"/><circle r="10"/></g>
<g transform="translate(14.5 15.5)" fill="url(#gg)"><rect x="-2.8" y="-13.8" width="5.6" height="6" rx="0.6" transform="rotate(0)"/><rect x="-2.8" y="-13.8" width="5.6" height="6" rx="0.6" transform="rotate(45)"/><rect x="-2.8" y="-13.8" width="5.6" height="6" rx="0.6" transform="rotate(90)"/><rect x="-2.8" y="-13.8" width="5.6" height="6" rx="0.6" transform="rotate(135)"/><rect x="-2.8" y="-13.8" width="5.6" height="6" rx="0.6" transform="rotate(180)"/><rect x="-2.8" y="-13.8" width="5.6" height="6" rx="0.6" transform="rotate(225)"/><rect x="-2.8" y="-13.8" width="5.6" height="6" rx="0.6" transform="rotate(270)"/><rect x="-2.8" y="-13.8" width="5.6" height="6" rx="0.6" transform="rotate(315)"/><circle r="10"/></g>
<circle cx="14.5" cy="15.5" r="7" fill="none" stroke="#dfe7ee" stroke-width="2"/>
<circle cx="14.5" cy="15.5" r="5" fill="#c9d3dc"/>
<circle cx="14.5" cy="15.5" r="2.3" fill="#1e2024"/>
</svg>
<svg class="a" style="left:45px;top:134px;" width="18" height="18" viewBox="0 0 18 18">
<rect x="1" y="1.5" width="15.5" height="12" rx="1" fill="#9a9a9a"/><rect x="2.5" y="3" width="12.5" height="9" fill="#1f55d4"/>
<path d="M4 4 L13 11 M7 4 L13 8.5" stroke="#6fa0f0" stroke-width="0.8"/>
<path d="M5 15 Q9 13.5 13 15 L13 16.5 Q9 15 5 16.5 Z" fill="#8e8e8e"/>
</svg>
<svg class="a" style="left:62px;top:156px;" width="34" height="24" viewBox="0 0 34 24">
<path d="M3 11 L15 5 L31 7 L20 14 Z" fill="#a3b6c8"/>
<path d="M6 10 L15 6 L28 8 M8 11.5 L22 12.5 M12 8 L24 9.5" stroke="#d6e0ea" stroke-width="1" opacity="0.8"/>
<path d="M14 7 L20 9 L18 11" stroke="#7d8fa1" stroke-width="1" fill="none"/>
<path d="M3 11 L20 14 L20 22 L3 18 Z" fill="#c5cbd1"/>
<path d="M5 15.5 L9.5 16.5 M12 17 L18 18.2" stroke="#262a2e" stroke-width="1.6"/>
<path d="M20 14 L31 7 L31 15 L20 22 Z" fill="#4e5862"/>
<path d="M21 17 L30 11" stroke="#7a848e" stroke-width="0.8"/>
</svg>
<svg class="a" style="left:62px;top:312px;" width="34" height="24" viewBox="0 0 34 24">
<path d="M3 11 L15 5 L31 7 L20 14 Z" fill="#a3b6c8"/>
<path d="M6 10 L15 6 L28 8 M8 11.5 L22 12.5 M12 8 L24 9.5" stroke="#d6e0ea" stroke-width="1" opacity="0.8"/>
<path d="M14 7 L20 9 L18 11" stroke="#7d8fa1" stroke-width="1" fill="none"/>
<path d="M3 11 L20 14 L20 22 L3 18 Z" fill="#c5cbd1"/>
<path d="M5 15.5 L9.5 16.5 M12 17 L18 18.2" stroke="#262a2e" stroke-width="1.6"/>
<path d="M20 14 L31 7 L31 15 L20 22 Z" fill="#4e5862"/>
<path d="M21 17 L30 11" stroke="#7a848e" stroke-width="0.8"/>
</svg>
<svg class="a" style="left:86px;top:186px;" width="16" height="17" viewBox="0 0 16 17">
<defs><linearGradient id="dbg86186" x1="0" y1="0" x2="1" y2="0"><stop offset="0" stop-color="#78838e"/><stop offset="0.35" stop-color="#dfe5ea"/><stop offset="1" stop-color="#78838e"/></linearGradient></defs>
<path d="M1.5 3 V14 Q7.5 17 13.5 14 V3 Z" fill="url(#dbg86186)" stroke="#56606a" stroke-width="0.8"/>
<ellipse cx="7.5" cy="3" rx="6" ry="2" fill="#dfe5ea" stroke="#56606a" stroke-width="0.8"/>
<path d="M1.5 6.8 Q7.5 9 13.5 6.8 M1.5 10.5 Q7.5 12.7 13.5 10.5" stroke="#56606a" stroke-width="0.8" fill="none"/>
</svg>
<svg class="a" style="left:86px;top:204px;" width="16" height="17" viewBox="0 0 16 17">
<defs><linearGradient id="dbg86204" x1="0" y1="0" x2="1" y2="0"><stop offset="0" stop-color="#78838e"/><stop offset="0.35" stop-color="#dfe5ea"/><stop offset="1" stop-color="#78838e"/></linearGradient></defs>
<path d="M1.5 3 V14 Q7.5 17 13.5 14 V3 Z" fill="url(#dbg86204)" stroke="#56606a" stroke-width="0.8"/>
<ellipse cx="7.5" cy="3" rx="6" ry="2" fill="#dfe5ea" stroke="#56606a" stroke-width="0.8"/>
<path d="M1.5 6.8 Q7.5 9 13.5 6.8 M1.5 10.5 Q7.5 12.7 13.5 10.5" stroke="#56606a" stroke-width="0.8" fill="none"/>
</svg>
<svg class="a" style="left:86px;top:222px;" width="16" height="17" viewBox="0 0 16 17">
<defs><linearGradient id="dbg86222" x1="0" y1="0" x2="1" y2="0"><stop offset="0" stop-color="#78838e"/><stop offset="0.35" stop-color="#dfe5ea"/><stop offset="1" stop-color="#78838e"/></linearGradient></defs>
<path d="M1.5 3 V14 Q7.5 17 13.5 14 V3 Z" fill="url(#dbg86222)" stroke="#56606a" stroke-width="0.8"/>
<ellipse cx="7.5" cy="3" rx="6" ry="2" fill="#dfe5ea" stroke="#56606a" stroke-width="0.8"/>
<path d="M1.5 6.8 Q7.5 9 13.5 6.8 M1.5 10.5 Q7.5 12.7 13.5 10.5" stroke="#56606a" stroke-width="0.8" fill="none"/>
</svg>
<svg class="a" style="left:86px;top:240px;" width="16" height="17" viewBox="0 0 16 17">
<defs><linearGradient id="dbg86240" x1="0" y1="0" x2="1" y2="0"><stop offset="0" stop-color="#78838e"/><stop offset="0.35" stop-color="#dfe5ea"/><stop offset="1" stop-color="#78838e"/></linearGradient></defs>
<path d="M1.5 3 V14 Q7.5 17 13.5 14 V3 Z" fill="url(#dbg86240)" stroke="#56606a" stroke-width="0.8"/>
<ellipse cx="7.5" cy="3" rx="6" ry="2" fill="#dfe5ea" stroke="#56606a" stroke-width="0.8"/>
<path d="M1.5 6.8 Q7.5 9 13.5 6.8 M1.5 10.5 Q7.5 12.7 13.5 10.5" stroke="#56606a" stroke-width="0.8" fill="none"/>
</svg>
<svg class="a" style="left:86px;top:258px;" width="16" height="17" viewBox="0 0 16 17">
<defs><linearGradient id="dbg86258" x1="0" y1="0" x2="1" y2="0"><stop offset="0" stop-color="#78838e"/><stop offset="0.35" stop-color="#dfe5ea"/><stop offset="1" stop-color="#78838e"/></linearGradient></defs>
<path d="M1.5 3 V14 Q7.5 17 13.5 14 V3 Z" fill="url(#dbg86258)" stroke="#56606a" stroke-width="0.8"/>
<ellipse cx="7.5" cy="3" rx="6" ry="2" fill="#dfe5ea" stroke="#56606a" stroke-width="0.8"/>
<path d="M1.5 6.8 Q7.5 9 13.5 6.8 M1.5 10.5 Q7.5 12.7 13.5 10.5" stroke="#56606a" stroke-width="0.8" fill="none"/>
</svg>
<svg class="a" style="left:86px;top:276px;" width="16" height="17" viewBox="0 0 16 17">
<defs><linearGradient id="dbg86276" x1="0" y1="0" x2="1" y2="0"><stop offset="0" stop-color="#78838e"/><stop offset="0.35" stop-color="#dfe5ea"/><stop offset="1" stop-color="#78838e"/></linearGradient></defs>
<path d="M1.5 3 V14 Q7.5 17 13.5 14 V3 Z" fill="url(#dbg86276)" stroke="#56606a" stroke-width="0.8"/>
<ellipse cx="7.5" cy="3" rx="6" ry="2" fill="#dfe5ea" stroke="#56606a" stroke-width="0.8"/>
<path d="M1.5 6.8 Q7.5 9 13.5 6.8 M1.5 10.5 Q7.5 12.7 13.5 10.5" stroke="#56606a" stroke-width="0.8" fill="none"/>
</svg>
<svg class="a" style="left:86px;top:294px;" width="16" height="17" viewBox="0 0 16 17">
<defs><linearGradient id="dbg86294" x1="0" y1="0" x2="1" y2="0"><stop offset="0" stop-color="#78838e"/><stop offset="0.35" stop-color="#dfe5ea"/><stop offset="1" stop-color="#78838e"/></linearGradient></defs>
<path d="M1.5 3 V14 Q7.5 17 13.5 14 V3 Z" fill="url(#dbg86294)" stroke="#56606a" stroke-width="0.8"/>
<ellipse cx="7.5" cy="3" rx="6" ry="2" fill="#dfe5ea" stroke="#56606a" stroke-width="0.8"/>
<path d="M1.5 6.8 Q7.5 9 13.5 6.8 M1.5 10.5 Q7.5 12.7 13.5 10.5" stroke="#56606a" stroke-width="0.8" fill="none"/>
</svg>
<svg class="a" style="left:86px;top:420px;" width="16" height="17" viewBox="0 0 16 17">
<defs><linearGradient id="dbg86420" x1="0" y1="0" x2="1" y2="0"><stop offset="0" stop-color="#3e9a1a"/><stop offset="0.35" stop-color="#a6e07a"/><stop offset="1" stop-color="#3e9a1a"/></linearGradient></defs>
<path d="M1.5 3 V14 Q7.5 17 13.5 14 V3 Z" fill="url(#dbg86420)" stroke="#2f7a12" stroke-width="0.8"/>
<ellipse cx="7.5" cy="3" rx="6" ry="2" fill="#a6e07a" stroke="#2f7a12" stroke-width="0.8"/>
<path d="M1.5 6.8 Q7.5 9 13.5 6.8 M1.5 10.5 Q7.5 12.7 13.5 10.5" stroke="#2f7a12" stroke-width="0.8" fill="none"/>
</svg>
<svg class="a" style="left:49px;top:167px;" width="8" height="8" viewBox="0 0 8 8"><path d="M7 0.5 L7 7 L0.5 7 Z" fill="#7a7a7a"/></svg>
<svg class="a" style="left:69px;top:244px;" width="8" height="10" viewBox="0 0 8 10"><path d="M1.5 0.5 L6.5 5 L1.5 9.5 Z" fill="#a6a6a6"/></svg>
<svg class="a" style="left:49px;top:321px;" width="8" height="10" viewBox="0 0 8 10"><path d="M1.5 0.5 L6.5 5 L1.5 9.5 Z" fill="#a6a6a6"/></svg>
<svg class="a" style="left:49px;top:351px;" width="8" height="10" viewBox="0 0 8 10"><path d="M1.5 0.5 L6.5 5 L1.5 9.5 Z" fill="#a6a6a6"/></svg>
<svg class="a" style="left:49px;top:381px;" width="8" height="8" viewBox="0 0 8 8"><path d="M7 0.5 L7 7 L0.5 7 Z" fill="#7a7a7a"/></svg>
<svg class="a" style="left:64px;top:345px;" width="30" height="22" viewBox="0 0 30 22">
<rect x="1" y="1" width="27" height="19" rx="3" fill="#fafafa" stroke="#7a7a7a" stroke-width="1.2"/>
<path d="M5 10.5 H23" stroke="#222" stroke-width="1.3"/><circle cx="5.5" cy="10.5" r="1.8" fill="#222"/>
<path d="M23 8.5 L26 10.5 L23 12.5 Z" fill="#222"/>
<path d="M10 10.5 L13 6.5 H17 M13 10.5 L16 14 H19" stroke="#222" stroke-width="1.1" fill="none"/>
<rect x="16.5" y="5.5" width="2" height="2" fill="#222"/><circle cx="19.5" cy="14" r="1.2" fill="#222"/>
</svg>
<svg class="a" style="left:63px;top:371px;" width="32" height="30" viewBox="0 0 32 30">
<rect x="2" y="1.5" width="21" height="26" rx="2" fill="#5a6f88" stroke="#4c5e74"/>
<circle cx="12.5" cy="11" r="8.5" fill="#a9c4e0"/><circle cx="12.5" cy="11" r="2" fill="#7e98b6"/>
<path d="M8 17 L18 22 L8 27 Z" fill="#3bb030"/>
<path d="M19 16 L29 21.5 L19 27 Z" fill="#c8924a"/>
</svg>
<svg class="a" style="left:87px;top:402px;" width="16" height="17" viewBox="0 0 16 17">
<path d="M1.5 1 H9.5 L13.5 5 V15.5 H1.5 Z" fill="#fbfbfb" stroke="#9a9a9a"/><path d="M9.5 1 V5 H13.5" fill="#e0e0e0" stroke="#9a9a9a" stroke-width="0.8"/>
<path d="M3.5 7 H10 M3.5 9.5 H8" stroke="#bdbdbd"/>
<rect x="7.5" y="9.5" width="6" height="6" fill="#dfe9f5" stroke="#3768b0" stroke-width="0.8"/>
<path d="M8 12 L10 14.5 L14.5 8" stroke="#1f5fc0" stroke-width="1.6" fill="none"/>
</svg>
<svg class="a" style="left:320px;top:133px;" width="15" height="17" viewBox="0 0 15 17">
<rect x="0.5" y="0.5" width="13.5" height="16" fill="#fff" stroke="#8f98a3"/>
<path d="M2.5 2.5 V14 M2.5 5 H5 M2.5 8.5 H5 M2.5 12 H5" stroke="#4a8fd0" stroke-width="1"/>
<path d="M6 3.5 H12 M6 5.5 H12 M7 7.5 H11 M6 9.5 H12 M6 11.5 H12 M7 13.5 H12" stroke="#3a3a3a" stroke-width="0.9"/>
</svg>
<svg class="a" style="left:420px;top:133px;" width="16" height="18" viewBox="0 0 16 18">
<path d="M1.5 1.5 H8.5 L12.5 5.5 V16.5 H1.5 Z" fill="#fbfbfb" stroke="#9aa3ad"/>
<path d="M8.5 1.5 V5.5 H12.5" fill="#e0e6ec" stroke="#9aa3ad" stroke-width="0.8"/>
<path d="M3.5 7 H8 M3.5 9 H10 M3.5 11 H6" stroke="#c4c4c4"/>
<circle cx="7" cy="13.8" r="3" fill="#1f2226"/><circle cx="12.2" cy="13.8" r="3" fill="#1f2226"/>
<rect x="6" y="10" width="7" height="3" rx="1" fill="#1f2226"/>
<circle cx="6.5" cy="14.5" r="0.9" fill="#7fb0e0"/><circle cx="11.7" cy="14.5" r="0.9" fill="#7fb0e0"/>
</svg>
<svg class="a" style="left:496px;top:133px;" width="17" height="16" viewBox="0 0 17 16">
<rect x="8.5" y="1" width="7.5" height="5.5" fill="#bde8a0" stroke="#2e9a24" stroke-width="1.2"/>
<rect x="0.8" y="5" width="7.5" height="5.5" fill="#bfe0fb" stroke="#1d58ad" stroke-width="1.2"/>
<rect x="8.5" y="9.2" width="7.5" height="5.5" fill="#bfe0fb" stroke="#1d58ad" stroke-width="1.2"/>
<circle cx="8" cy="4.5" r="2.5" fill="#f7b81e"/>
</svg>
<svg class="a" style="left:621px;top:134px;" width="16" height="16" viewBox="0 0 16 16">
<path d="M1.5 0.5 H9.5 L13.5 4.5 V15.5 H1.5 Z" fill="#fbfbfb" stroke="#9a9a9a"/><path d="M9.5 0.5 V4.5 H13.5" fill="#e0e0e0" stroke="#9a9a9a" stroke-width="0.8"/>
<path d="M3.5 6.5 H10 M3.5 9 H8" stroke="#bdbdbd"/>
<rect x="7.5" y="9" width="6.5" height="6.5" fill="#dfe9f5" stroke="#3768b0" stroke-width="0.8"/>
<path d="M8 11.5 L10.2 14.5 L15 7.5" stroke="#1f5fc0" stroke-width="1.6" fill="none"/>
</svg>
<svg class="a" style="left:861px;top:163px;" width="36" height="36" viewBox="0 0 36 36">
<defs><radialGradient id="ppg" cx="0.4" cy="0.35" r="0.7"><stop offset="0" stop-color="#fafafa"/><stop offset="1" stop-color="#cfcfcf"/></radialGradient></defs>
<ellipse cx="18" cy="32" rx="14" ry="2" fill="#c8c8c8" opacity="0.7"/>
<rect x="1.5" y="1.5" width="21" height="28" rx="2" fill="#6c6c6c" stroke="#5a5a5a"/>
<circle cx="12" cy="12" r="9.5" fill="url(#ppg)"/><circle cx="12" cy="12" r="2.5" fill="none" stroke="#8aa0c0"/>
<path d="M7 18 L21 25.5 L7 33 Z" fill="#21a52a"/>
<path d="M19 18 L33 25.5 L19 33 Z" fill="#e59a2a"/>
</svg></body></html>
